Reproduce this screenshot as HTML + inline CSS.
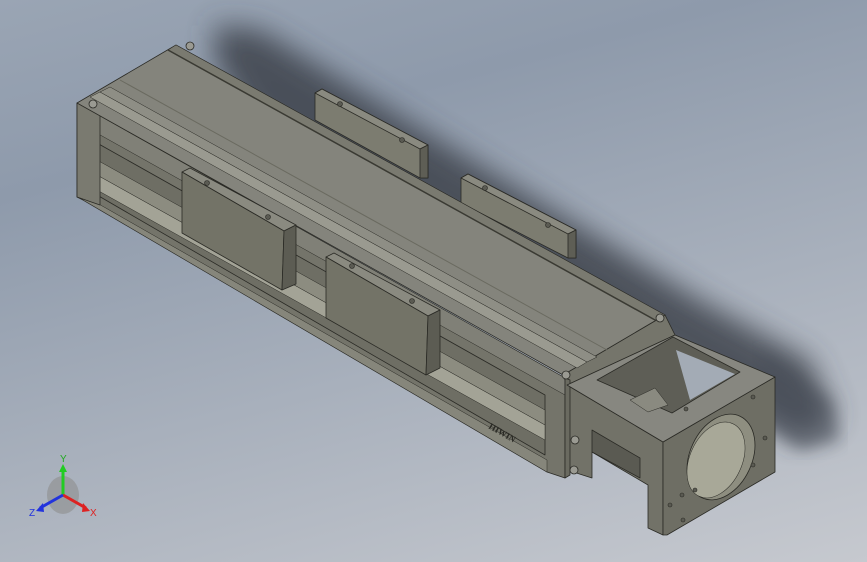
<!DOCTYPE html>
<html><head><style>
html,body{margin:0;padding:0;}
body{width:867px;height:562px;overflow:hidden;background:linear-gradient(165deg,#9aa5b4 0%,#8e9aab 25%,#a8b0bc 60%,#c6c9cf 100%);}
svg{display:block}
</style></head><body>
<svg width="867" height="562" viewBox="0 0 867 562" xmlns="http://www.w3.org/2000/svg">
<defs>
<filter id="bl" x="-20%" y="-20%" width="140%" height="140%"><feGaussianBlur stdDeviation="14"/></filter>
<filter id="bl2"><feGaussianBlur stdDeviation="8"/></filter>
</defs>
<polygon points="215,25 260,30 700,300 810,360 835,420 800,440 700,380 250,120 215,60" fill="#3c424c" opacity="0.85" filter="url(#bl)"/>
<polygon points="760,350 830,400 840,440 800,450 760,420" fill="#4a505a" opacity="0.6" filter="url(#bl2)"/>

<g stroke="#2a2a25" stroke-width="0.8" stroke-linejoin="round">
<polygon points="315,93 322,89 428,145 428,178 420,178 315,120" fill="#7c7c70"/>
<polygon points="315,93 322,89 428,145 420,149" fill="#8a8a80"/>
<polygon points="420,149 428,145 428,178 420,178" fill="#5e5e55"/>
<polygon points="461,178 468,174 576,230 576,258 568,258 461,203" fill="#7c7c70"/>
<polygon points="461,178 468,174 576,230 568,234" fill="#8a8a80"/>
<polygon points="568,234 576,230 576,258 568,258" fill="#5e5e55"/>

<polygon points="77,103 565,378 565,478 547,472 83,200 77,197" fill="#74746a"/>
<polygon points="97,143 545,395 545,455 97,195" fill="#6e6e64"/>
<polygon points="97,160 545,410 545,425 97,175" fill="#8c8c80" stroke-width="0.5"/>
<polygon points="97,175 545,425 545,440 97,190" fill="#a3a396" stroke-width="0.5"/>
<polygon points="83,195 547,460 547,472 83,200" fill="#86867b" stroke-width="0.5"/>
<polygon points="77,103 565,378 565,395 77,122" fill="#808077" stroke-width="0.5"/>
<polygon points="77,103 100,112 100,205 77,197" fill="#7a7a70"/>

<polygon points="563,375 665,315 675,335 567,385" fill="#75756b"/>
<polygon points="176,45 665,315 563,375 77,103" fill="#84847c"/>
<polygon points="176,45 665,315 655,320 168,50" fill="#7a7a70" stroke-width="0.5"/>
<line x1="168" y1="50" x2="655" y2="320" stroke="#3a3a33" stroke-width="1.5"/>
<polygon points="100,92 587,362 577,368 90,97" fill="#9a9a90" stroke-width="0.5"/>
<polygon points="110,87 597,357 587,362 100,92" fill="#8e8e85" stroke-width="0.5"/>
<line x1="120" y1="80" x2="607" y2="350" stroke="#6a6a60" stroke-width="1"/>

<polygon points="182,172 190,168 296,225 284,231" fill="#8a8a80"/>
<polygon points="182,172 284,231 282,290 182,233" fill="#737367"/>
<polygon points="284,231 296,225 296,284 282,290" fill="#5c5c53"/>
<polygon points="326,257 334,253 440,310 428,316" fill="#8a8a80"/>
<polygon points="326,257 428,316 426,375 326,318" fill="#737367"/>
<polygon points="428,316 440,310 440,368 426,375" fill="#5c5c53"/>

<polygon points="567,385 663,442 663,535 648,528 648,485 592,452 592,478 567,470" fill="#727268"/>
<polygon points="592,430 640,458 640,478 592,452" fill="#5a5a52"/>
<polygon points="565,378 570,380 570,475 565,478" fill="#6a6a60"/>
<polygon points="663,442 775,377 775,472 667,535 663,535" fill="#6e6e64"/>
<polygon points="567,385 675,335 775,377 663,442" fill="#878780"/>
<polygon points="597,380 673,337 740,372 672,413" fill="#5e5e56"/>
<polygon points="676,350 735,374 690,400" fill="#a3abb5" stroke="none"/>
<polygon points="630,400 655,388 668,405 648,412" fill="#8a8a80" stroke-width="0.5"/>
<ellipse cx="721" cy="457" rx="31" ry="45" transform="rotate(25 721 457)" fill="#8e8e80"/>
<ellipse cx="716" cy="460" rx="26" ry="40" transform="rotate(25 716 460)" fill="#a8a898" stroke-width="0.5"/>
</g>

<g fill="#9a9a92" stroke="#2a2a25" stroke-width="0.8">
<circle cx="190" cy="46" r="4"/><circle cx="93" cy="104" r="4"/>
<circle cx="660" cy="318" r="4"/><circle cx="566" cy="375" r="4"/>
<circle cx="575" cy="440" r="4"/><circle cx="574" cy="470" r="4"/>
</g>
<g fill="#5a5a52" stroke="#2a2a25" stroke-width="0.6">
<circle cx="207" cy="183" r="2.5"/><circle cx="268" cy="217" r="2.5"/>
<circle cx="352" cy="266" r="2.5"/><circle cx="412" cy="301" r="2.5"/>
<circle cx="340" cy="104" r="2.5"/><circle cx="402" cy="140" r="2.5"/>
<circle cx="485" cy="188" r="2.5"/><circle cx="548" cy="225" r="2.5"/>
<circle cx="686" cy="409" r="2"/><circle cx="753" cy="397" r="2"/><circle cx="765" cy="438" r="2"/>
<circle cx="753" cy="465" r="2"/><circle cx="682" cy="495" r="2"/><circle cx="670" cy="505" r="2"/>
<circle cx="683" cy="520" r="2"/><circle cx="695" cy="490" r="2"/>
</g>
<text x="488" y="428" font-family="Liberation Serif,serif" font-size="9" font-weight="bold" fill="#2a2a25" transform="rotate(30 488 428)">HIWIN</text>

<ellipse cx="63" cy="495" rx="16" ry="19" fill="#8a8a88" opacity="0.55"/>
<line x1="63" y1="495" x2="63" y2="470" stroke="#22cc22" stroke-width="3"/>
<polygon points="59,472 67,472 63,464" fill="#22cc22"/>
<line x1="63" y1="495" x2="86" y2="508" stroke="#dd2222" stroke-width="3"/>
<polygon points="83,503 90,511 82,512" fill="#dd2222"/>
<line x1="63" y1="495" x2="40" y2="508" stroke="#2233dd" stroke-width="3"/>
<polygon points="43,503 36,511 44,512" fill="#2233dd"/>
<text x="60" y="462" font-family="Liberation Sans,sans-serif" font-size="10" fill="#22aa22">Y</text>
<text x="90" y="516" font-family="Liberation Sans,sans-serif" font-size="10" fill="#dd2222">X</text>
<text x="29" y="516" font-family="Liberation Sans,sans-serif" font-size="10" fill="#2233dd">Z</text>
</svg>
</body></html>
